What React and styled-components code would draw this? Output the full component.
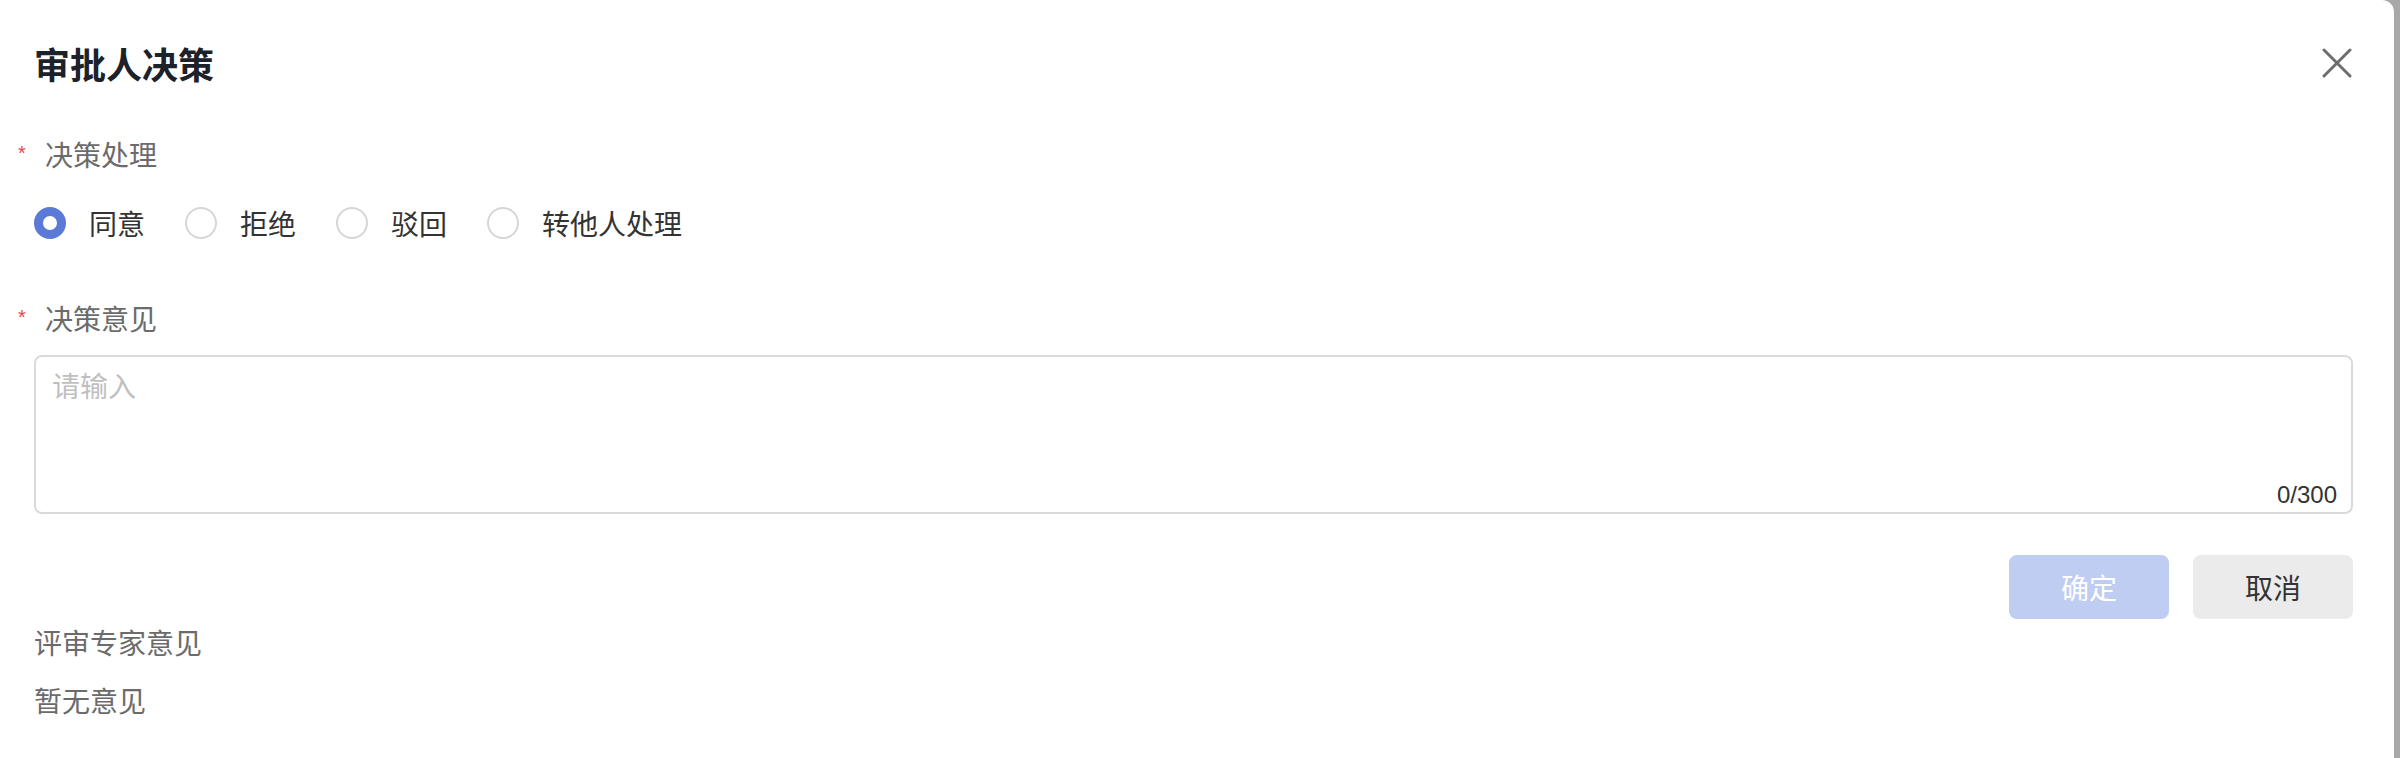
import React, { useState } from "react";
import styled, { createGlobalStyle } from "styled-components";

const GlobalStyle = createGlobalStyle`
  html, body {
    margin: 0;
    padding: 0;
    height: 100%;
    background: #a8a8a8;
    overflow: hidden;
  }
  body {
    font-family: "Noto Sans CJK SC", "Noto Sans", sans-serif;
  }
`;

const Page = styled.div`
  height: 758px;
  display: flex;
`;

const Modal = styled.div`
  width: 2394px;
  height: 100%;
  background: #fff;
  border-top-right-radius: 12px;
  box-sizing: border-box;
  padding: 0 41px 0 34px;
  display: flex;
  flex-direction: column;
`;

const Header = styled.div`
  height: 126px;
  display: flex;
  align-items: center;
  justify-content: space-between;
`;

const Title = styled.h2`
  margin: 0;
  font-size: 36px;
  font-weight: 700;
  line-height: 50px;
  color: #1d2129;
`;

const CloseButton = styled.button`
  width: 30px;
  height: 30px;
  padding: 0;
  border: none;
  background: none;
  cursor: pointer;
  display: flex;
  align-items: center;
  justify-content: center;
  margin-right: 1px;
`;

const Label = styled.div`
  display: flex;
  align-items: center;
  margin-top: ${(p) => p.$top}px;
  height: 40px;
  font-size: 28px;
  color: #6b6b6b;
`;

const Star = styled.span`
  width: 27px;
  margin-left: -16px;
  color: #e5484d;
  font-size: 20px;
  font-family: "Liberation Sans", sans-serif;
  line-height: 1;
  position: relative;
  top: -1px;
`;

const RadioRow = styled.div`
  display: flex;
  align-items: center;
  gap: 40px;
  margin-top: 29px;
  height: 40px;
`;

const RadioItem = styled.label`
  display: flex;
  align-items: center;
  gap: 23px;
  cursor: pointer;
  font-size: 28px;
  color: #333;
`;

const RadioDot = styled.span`
  flex: none;
  width: 32px;
  height: 32px;
  box-sizing: border-box;
  border-radius: 50%;
  background: #fff;
  border: ${(p) => (p.$checked ? "9px solid #5b79d6" : "2px solid #d6d6d6")};
`;

const TextBox = styled.div`
  position: relative;
  margin-top: 17px;
`;

const TextArea = styled.textarea`
  display: block;
  width: 100%;
  height: 159px;
  box-sizing: border-box;
  border: 2px solid #dadada;
  border-radius: 8px;
  padding: 8px 16px;
  resize: none;
  outline: none;
  font-family: inherit;
  font-size: 28px;
  line-height: 40px;
  color: #333;

  &::placeholder {
    color: #bfbfbf;
  }
`;

const Counter = styled.span`
  position: absolute;
  right: 16px;
  bottom: 5px;
  font-family: "Liberation Sans", sans-serif;
  font-size: 24px;
  color: #333;
`;

const Actions = styled.div`
  display: flex;
  justify-content: flex-end;
  gap: 24px;
  margin-top: 41px;
`;

const Button = styled.button`
  width: 160px;
  height: 64px;
  border: none;
  border-radius: 8px;
  font-family: inherit;
  font-size: 28px;
  background: ${(p) => (p.$primary ? "#c0cdf3" : "#ebebeb")};
  color: ${(p) => (p.$primary ? "#fff" : "#333")};
  cursor: pointer;
`;

const Note = styled.div`
  margin-top: ${(p) => p.$top}px;
  height: 40px;
  line-height: 40px;
  font-size: 28px;
  color: #6b6b6b;
`;

const options = ["同意", "拒绝", "驳回", "转他人处理"];

export default function App() {
  const [choice, setChoice] = useState("同意");
  const [text, setText] = useState("");

  return (
    <Page>
      <GlobalStyle />
      <Modal>
        <Header>
          <Title>审批人决策</Title>
          <CloseButton aria-label="close">
            <svg width="30" height="30" viewBox="0 0 30 30">
              <path
                d="M2 2 L28 28 M28 2 L2 28"
                stroke="#6e6e6e"
                strokeWidth="3"
                strokeLinecap="round"
              />
            </svg>
          </CloseButton>
        </Header>

        <Label $top={8}>
          <Star>*</Star>
          决策处理
        </Label>
        <RadioRow>
          {options.map((o) => (
            <RadioItem key={o} onClick={() => setChoice(o)}>
              <RadioDot $checked={choice === o} />
              {o}
            </RadioItem>
          ))}
        </RadioRow>

        <Label $top={55}>
          <Star>*</Star>
          决策意见
        </Label>
        <TextBox>
          <TextArea
            placeholder="请输入"
            maxLength={300}
            value={text}
            onChange={(e) => setText(e.target.value)}
          />
          <Counter>{text.length}/300</Counter>
        </TextBox>

        <Actions>
          <Button $primary disabled={!text}>确定</Button>
          <Button>取消</Button>
        </Actions>

        <Note $top={3}>评审专家意见</Note>
        <Note $top={18}>暂无意见</Note>
      </Modal>
    </Page>
  );
}
